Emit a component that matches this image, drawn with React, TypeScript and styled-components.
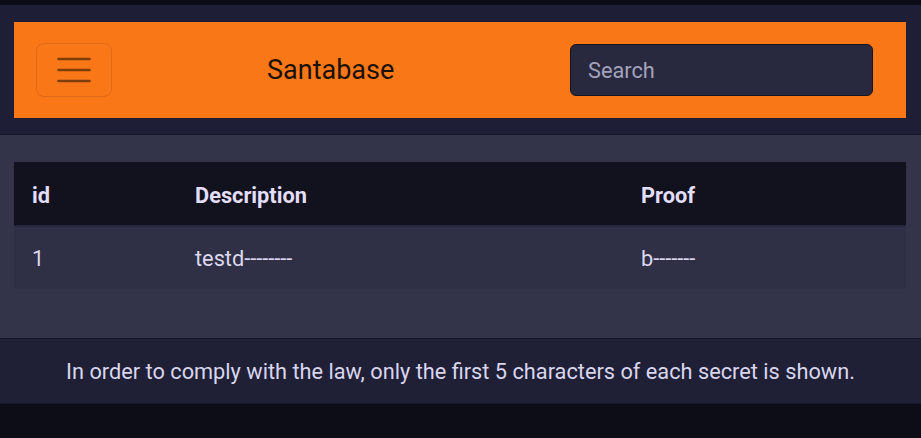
import React from "react";
import styled, { createGlobalStyle } from "styled-components";

const Global = createGlobalStyle`
  html, body { margin: 0; padding: 0; background: #0d0d17; }
  body { font-family: Roboto, "Noto Sans", "Liberation Sans", sans-serif; }
  * { box-sizing: border-box; }
`;

const Page = styled.div`
  padding-top: 5px;
`;

const Header = styled.header`
  background: #1e1f36;
  padding: 17px 15px 16px 14px;
  border-bottom: 1px solid #15152a;
`;

const NavBar = styled.nav`
  background: #fa7718;
  height: 96px;
  display: flex;
  align-items: center;
  padding: 0 33px 0 22px;
`;

const MenuButton = styled.button`
  width: 76px;
  height: 54px;
  border: 1px solid rgba(0, 0, 0, 0.1);
  border-radius: 8px;
  background: transparent;
  display: flex;
  align-items: center;
  justify-content: center;
  padding: 0;
`;

const Title = styled.div`
  margin-left: 155px;
  font-size: 27px;
  color: #1a1208;
  flex: 1;
`;

const Search = styled.input`
  width: 303px;
  height: 52px;
  background: #28293f;
  border: 1px solid #15151f;
  border-radius: 6px;
  padding: 0 17px;
  font-family: inherit;
  font-size: 21.75px;
  color: #e0dcf5;
  outline: none;
  &::placeholder { color: #a3a2bb; }
`;

const Main = styled.main`
  background: #33334a;
  padding: 27px 15px 49px 14px;
`;

const Table = styled.table`
  width: 100%;
  border-collapse: collapse;
  table-layout: fixed;
`;

const Th = styled.th<{ $w: number }>`
  width: ${(p) => p.$w}px;
  text-align: left;
  background: #12121f;
  color: #e3def9;
  font-weight: 700;
  font-size: 21.75px;
  line-height: 30px;
  padding: 19px 18px 14px;
  border-bottom: 2px solid #26263c;
`;

const Td = styled.td`
  background: #2f2f45;
  color: #dcd8f0;
  font-size: 21.75px;
  line-height: 30px;
  padding: 17px 18px 15px;
`;

const Footer = styled.footer`
  background: #1f2036;
  border-top: 1px solid #17172a;
  border-bottom: 1px solid #17172a;
  height: 66px;
  display: flex;
  align-items: center;
  justify-content: center;
  color: #d9d6ee;
  font-size: 21.75px;
`;

function Hamburger() {
  return (
    <svg width="34" height="26" viewBox="0 0 34 26">
      <g stroke="#7e3e08" strokeWidth="2.6" strokeLinecap="round">
        <line x1="1.5" y1="2" x2="32.5" y2="2" />
        <line x1="1.5" y1="13" x2="32.5" y2="13" />
        <line x1="1.5" y1="24" x2="32.5" y2="24" />
      </g>
    </svg>
  );
}

export default function App() {
  return (
    <Page>
      <Global />
      <Header>
        <NavBar>
          <MenuButton aria-label="menu">
            <Hamburger />
          </MenuButton>
          <Title>Santabase</Title>
          <Search placeholder="Search" />
        </NavBar>
      </Header>
      <Main>
        <Table>
          <thead>
            <tr>
              <Th $w={163}>id</Th>
              <Th $w={446}>Description</Th>
              <Th $w={283}>Proof</Th>
            </tr>
          </thead>
          <tbody>
            <tr>
              <Td>1</Td>
              <Td>testd--------</Td>
              <Td>b-------</Td>
            </tr>
          </tbody>
        </Table>
      </Main>
      <Footer>
        In order to comply with the law, only the first 5 characters of each secret is shown.
      </Footer>
    </Page>
  );
}
